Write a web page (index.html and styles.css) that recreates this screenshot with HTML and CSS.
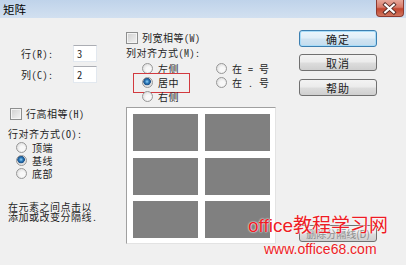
FILE: index.html
```html
<!DOCTYPE html>
<html lang="zh-CN">
<head>
  <meta charset="UTF-8">
  <title>矩阵</title>
  <link rel="stylesheet" href="styles.css">
</head>
<body>
  <div class="window">
    <div class="titlebar">
      <span class="title">矩阵</span>
      <span class="close">
        <svg width="28" height="17" viewBox="0 0 28 17">
          <path d="M9.5 4.5 L18.5 12.5 M18.5 4.5 L9.5 12.5" stroke="#4a2420" stroke-width="4" stroke-linecap="square"/>
          <path d="M9.5 4.5 L18.5 12.5 M18.5 4.5 L9.5 12.5" stroke="#fff" stroke-width="2.2" stroke-linecap="square"/>
        </svg>
      </span>
    </div>

    <div class="content">
      <div class="col col-left">
        <div class="field field-first"><span class="label">行(R):</span><span class="input">3</span></div>
        <div class="field"><span class="label">列(C):</span><span class="input">2</span></div>
        <div class="check check-left"><span class="box"></span>行高相等(H)</div>
        <div class="heading">行对齐方式(O):</div>
        <div class="radios">
          <div class="radio"><span class="dot"></span>顶端</div>
          <div class="radio on"><span class="dot"></span>基线</div>
          <div class="radio"><span class="dot"></span>底部</div>
        </div>
        <p class="hint">在元素之间点击以<br>添加或改变分隔线.</p>
      </div>

      <div class="col col-mid">
        <div class="check"><span class="box"></span>列宽相等(W)</div>
        <div class="heading">列对齐方式(M):</div>
        <div class="radio-grid">
          <div class="radio"><span class="dot"></span>左侧</div>
          <div class="radio"><span class="dot"></span>在 = 号</div>
          <div class="radio on marked"><span class="dot"></span>居中</div>
          <div class="radio"><span class="dot"></span>在 . 号</div>
          <div class="radio"><span class="dot"></span>右侧</div>
        </div>
        <div class="preview">
          <div class="cell"></div><div class="cell"></div>
          <div class="cell"></div><div class="cell"></div>
          <div class="cell"></div><div class="cell"></div>
        </div>
      </div>

      <div class="col col-right">
        <div class="btn default">确定</div>
        <div class="btn btn-2">取消</div>
        <div class="btn btn-3">帮助</div>
        <div class="btn btn-last">删除分隔线(D)</div>
      </div>
    </div>

    <div class="watermark">
      <div class="wm-big">office教程学习网</div>
      <div class="wm-url">www.office68.com</div>
    </div>
  </div>
</body>
</html>
```

FILE: styles.css
```css
body {
  margin: 0;
  font-family: "Noto Sans Mono CJK SC", "Noto Sans CJK SC", monospace;
  font-size: 10px;
  letter-spacing: 0.5px;
  color: #1e1e1e;
}
.window {
  position: relative;
  width: 406px;
  height: 265px;
  background: #f0f0f0;
  overflow: hidden;
}
.titlebar {
  height: 18px;
  display: flex;
  align-items: center;
  justify-content: space-between;
  background: linear-gradient(to bottom, #bfd3ea, #d2e0f0);
}
.title {
  margin-left: 3px;
  font-family: "Noto Sans CJK SC", sans-serif;
  font-size: 11.5px;
  letter-spacing: 0;
  color: #000;
}
.close {
  width: 28px;
  height: 17px;
  margin-right: 2px;
  align-self: flex-start;
  border: 1px solid #8d3a30;
  border-top: none;
  border-radius: 0 0 4px 4px;
  box-sizing: border-box;
  background: linear-gradient(to bottom, #e7a79a 0%, #d77b6a 45%, #c2452f 55%, #d0765f 100%);
  display: flex;
}
.close svg {
  margin-left: -1px;
}

.content {
  display: flex;
  height: 247px;
  padding-left: 8px;
}
.col {
  display: flex;
  flex-direction: column;
}
.col-left {
  width: 118px;
}
.col-mid {
  width: 150px;
}
.col-right {
  width: 78px;
  margin-left: 23px;
  padding-bottom: 23px;
  box-sizing: border-box;
}

.field {
  display: flex;
  align-items: center;
  margin-top: 4px;
}
.field-first {
  margin-top: 27px;
}
.label {
  width: 52px;
  margin-left: 13px;
  line-height: 13px;
}
.input {
  width: 24px;
  height: 17px;
  box-sizing: border-box;
  padding-left: 3px;
  line-height: 15px;
  background: #fff;
  border: 1px solid #e2e8ef;
  border-top-color: #abadb3;
  font-size: 10.5px;
}

.check {
  display: flex;
  align-items: center;
  height: 12px;
  margin-top: 14px;
  line-height: 12px;
}
.check-left {
  height: 13px;
  margin-top: 24px;
  margin-left: 2px;
}
.box {
  width: 12px;
  height: 12px;
  margin-right: 4px;
  box-sizing: border-box;
  border: 1px solid #8e8f8f;
  background: linear-gradient(135deg, #cfcfcf, #f4f4f4);
  box-shadow: inset 0 0 0 1px #f4f4f4;
}

.heading {
  line-height: 12px;
  margin-top: 3px;
}
.col-left .heading {
  margin-top: 8px;
}

.radio {
  display: flex;
  align-items: center;
  height: 13px;
  position: relative;
}
.dot {
  width: 11px;
  height: 11px;
  margin-right: 5px;
  box-sizing: border-box;
  border-radius: 50%;
  border: 1px solid #979797;
  background: radial-gradient(circle at 60% 60%, #f8f8f8 30%, #d4d4d4 100%);
}
.radio.on .dot {
  background: radial-gradient(circle at 45% 40%, #8fd3fb 0, #2a76b6 2px, #1b4f86 3.5px, #dcdcdc 4px, #f6f6f6 100%);
}
.radios {
  padding-left: 8px;
  margin-top: 1px;
}
.radio-grid {
  display: grid;
  grid-template-columns: 74px auto;
  grid-auto-rows: 14px;
  padding-left: 16px;
  margin-top: 2px;
}
.radio-grid .radio {
  height: 14px;
}
.marked::before {
  content: "";
  position: absolute;
  left: -9px;
  top: -2px;
  width: 55px;
  height: 18px;
  border: 1px solid #d23a3f;
}

.hint {
  margin: 22px 0 0;
  line-height: 10px;
}

.preview {
  margin-top: 4px;
  height: 137px;
  box-sizing: border-box;
  padding: 6px 5px 5px 6px;
  background: #fff;
  border: 1px solid #e3e3e3;
  border-top-color: #a0a0a0;
  border-left-color: #a0a0a0;
  display: grid;
  grid-template-columns: 65px 65px;
  grid-template-rows: repeat(3, 37px);
  column-gap: 7px;
  row-gap: 6.5px;
}
.cell {
  background: #808080;
}

.btn {
  height: 17px;
  box-sizing: border-box;
  border: 1px solid #707070;
  border-radius: 3px;
  background: linear-gradient(to bottom, #f3f3f3 0%, #ebebeb 48%, #dddddd 52%, #cfcfcf 100%);
  display: flex;
  align-items: center;
  justify-content: center;
  font-family: "Noto Sans CJK SC", sans-serif;
  font-size: 11px;
  letter-spacing: 1px;
  color: #222;
}
.default {
  margin-top: 12px;
  border-color: #3c7fb1;
  box-shadow: inset 0 0 0 1px #a8dcf8;
  background: linear-gradient(to bottom, #eaf5fc 0%, #e0eef8 48%, #d0e4f2 52%, #c4dcee 100%);
}
.btn-2 {
  margin-top: 7px;
}
.btn-3 {
  margin-top: 8px;
}
.btn-last {
  margin-top: auto;
  color: #8a8a8a;
  font-size: 10px;
  letter-spacing: 0;
}

.watermark {
  position: absolute;
  left: 248px;
  top: 214px;
  font-family: "Liberation Sans", "Noto Sans CJK SC", sans-serif;
  color: #ee1c25;
  letter-spacing: 0;
}
.wm-big {
  font-size: 19px;
  line-height: 24px;
  text-shadow: 0 0 2px #fff, 0 0 1px #fff;
}
.wm-url {
  margin-left: 16px;
  font-size: 14px;
  line-height: 22px;
  text-shadow: 0 0 2px #fff;
}
```
